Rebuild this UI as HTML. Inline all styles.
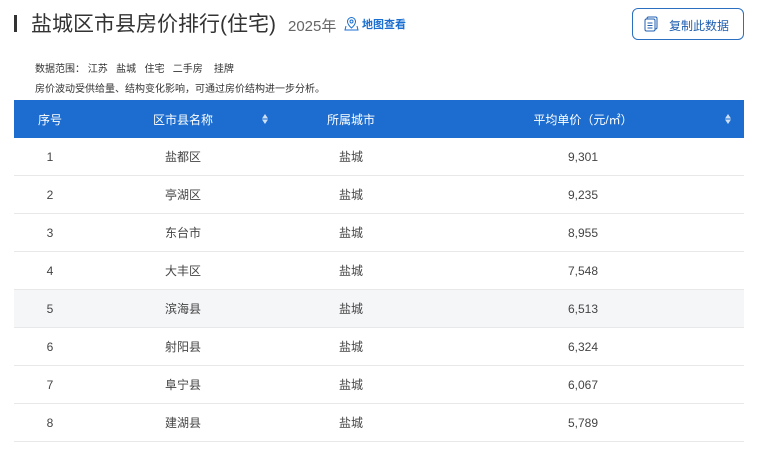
<!DOCTYPE html>
<html><head><meta charset="utf-8"><style>
body{margin:0;width:761px;height:450px;background:#fff;font-family:"Liberation Sans","Noto Sans CJK SC",sans-serif;overflow:hidden;position:relative}
.bar{position:absolute;left:14px;top:15px;width:3px;height:17px;background:#333}
.title{position:absolute;left:31px;top:8px;font-size:21px;color:#333}
.year{position:absolute;left:288px;top:15px;font-size:15px;color:#666}
.map{position:absolute;left:344px;top:16px;font-size:11px;color:#1a6fd0;font-weight:bold}
.btn{position:absolute;left:632px;top:8px;width:112px;height:32px;border:1px solid #2a6fc0;border-radius:6px;box-sizing:border-box;font-size:12px;color:#1f5fb0}
.sub{position:absolute;left:35px;font-size:10px;color:#333}
table{position:absolute;left:14px;top:100px;width:730px;border-collapse:collapse;font-size:12px;color:#444;table-layout:fixed}
th{background:#1c6dcf;color:#fff;font-weight:normal;height:38px;padding:0;position:relative}
td{height:37px;padding:0;border-bottom:1px solid #e8e8e8;text-align:center}
tr.h td{background:#f5f6f8}
.s{position:absolute;top:13px;width:8px;height:12px}
</style></head><body>
<div class="bar"></div>
<div class="title">盐城区市县房价排行(住宅)</div>
<div class="year">2025年</div>
<div class="map"><svg width="15" height="15" viewBox="0 0 15 15" style="vertical-align:-3px"><path d="M7.5 1.5a4 4 0 0 1 4 4c0 3-4 6.5-4 6.5s-4-3.5-4-6.5a4 4 0 0 1 4-4z" fill="none" stroke="#1a6fd0"/><circle cx="7.5" cy="5.5" r="1.5" fill="none" stroke="#1a6fd0"/><path d="M2 10l-1 4h13l-1-4" fill="none" stroke="#1a6fd0"/></svg> 地图查看</div>
<div class="btn"><svg width="14" height="16" viewBox="0 0 14 16" style="position:absolute;left:11px;top:7px"><rect x="3" y="1" width="10" height="12" rx="1.5" fill="none" stroke="#1f5fb0"/><rect x="1" y="3" width="10" height="12" rx="1.5" fill="#fff" stroke="#1f5fb0"/><path d="M3.5 7h5M3.5 9.5h5M3.5 12h5" stroke="#1f5fb0"/></svg><span style="position:absolute;left:36px;top:8px">复制此数据</span></div>
<div class="sub" style="top:60px">数据范围：&nbsp;江苏&nbsp;&nbsp;&nbsp;盐城&nbsp;&nbsp;&nbsp;住宅&nbsp;&nbsp;&nbsp;二手房&nbsp;&nbsp;&nbsp;&nbsp;挂牌</div>
<div class="sub" style="top:80px">房价波动受供给量、结构变化影响，可通过房价结构进一步分析。</div>
<table>
<colgroup><col style="width:72px"><col style="width:194px"><col style="width:142px"><col></colgroup>
<tr><th>序号</th><th>区市县名称<svg class="s" style="left:175px" viewBox="0 0 8 12"><path d="M4 1L7 5.5H1z M1 6.5H7L4 11z" fill="#cfe0f5"/></svg></th><th>所属城市</th><th>平均单价（元/㎡）<svg class="s" style="left:302px" viewBox="0 0 8 12"><path d="M4 1L7 5.5H1z M1 6.5H7L4 11z" fill="#cfe0f5"/></svg></th></tr>
<tr><td>1</td><td>盐都区</td><td>盐城</td><td>9,301</td></tr>
<tr><td>2</td><td>亭湖区</td><td>盐城</td><td>9,235</td></tr>
<tr><td>3</td><td>东台市</td><td>盐城</td><td>8,955</td></tr>
<tr><td>4</td><td>大丰区</td><td>盐城</td><td>7,548</td></tr>
<tr class="h"><td>5</td><td>滨海县</td><td>盐城</td><td>6,513</td></tr>
<tr><td>6</td><td>射阳县</td><td>盐城</td><td>6,324</td></tr>
<tr><td>7</td><td>阜宁县</td><td>盐城</td><td>6,067</td></tr>
<tr><td>8</td><td>建湖县</td><td>盐城</td><td>5,789</td></tr>
</table>
</body></html>
